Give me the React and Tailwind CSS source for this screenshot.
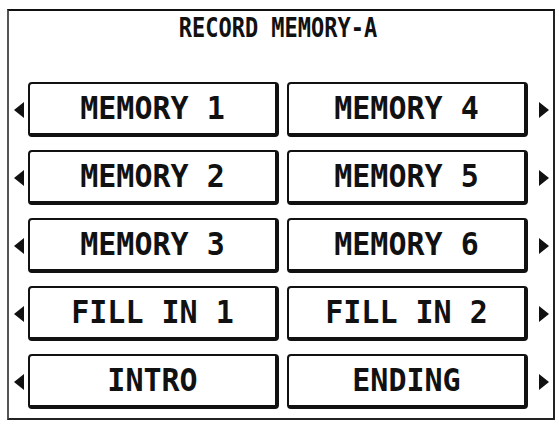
const rows = [
  ["MEMORY 1", "MEMORY 4"],
  ["MEMORY 2", "MEMORY 5"],
  ["MEMORY 3", "MEMORY 6"],
  ["FILL IN 1", "FILL IN 2"],
  ["INTRO", "ENDING"],
];

function Arrow({ dir }) {
  // little solid triangle beside each row
  return (
    <svg width="10" height="16" viewBox="0 0 10 16" className="shrink-0">
      {dir === "left" ? (
        <polygon points="10,0 0,8 10,16" fill="#111" />
      ) : (
        <polygon points="0,0 10,8 0,16" fill="#111" />
      )}
    </svg>
  );
}

function MemButton({ label, width }) {
  return (
    <div
      className={`${width} h-[55px] shrink-0 flex items-center justify-center rounded-[4px] border-t-2 border-l-2 border-r-[4px] border-b-[4px] border-[#111] bg-white`}
    >
      <span className="font-['DejaVu_Sans_Mono',monospace] font-bold text-[30px] leading-none text-[#111] whitespace-pre scale-y-[1.05]">
        {label}
      </span>
    </div>
  );
}

export default function App() {
  return (
    <div className="w-[559px] h-[426px] bg-white overflow-hidden pt-[9px] pl-[7px]">
      <div className="w-[548px] h-[411px] border-2 border-t-[#111] border-r-[#222] border-b-[#222] border-l-[#555] flex flex-col">
        {/* header */}
        <div className="h-[36px] flex items-center justify-center pr-[6px]">
          <span className="font-['DejaVu_Sans_Mono',monospace] font-bold text-[22px] leading-none text-[#111] scale-y-[1.2] whitespace-pre">
            RECORD MEMORY-A
          </span>
        </div>

        {/* memory slots */}
        <div className="mt-[35px] flex flex-col gap-[13px] pl-[5px]">
          {rows.map(([a, b]) => (
            <div key={a} className="flex items-center">
              <Arrow dir="left" />
              <div className="ml-[4px]">
                <MemButton label={a} width="w-[251px]" />
              </div>
              <div className="ml-[8px]">
                <MemButton label={b} width="w-[241px]" />
              </div>
              <div className="ml-[11px]">
                <Arrow dir="right" />
              </div>
            </div>
          ))}
        </div>
      </div>
    </div>
  );
}
